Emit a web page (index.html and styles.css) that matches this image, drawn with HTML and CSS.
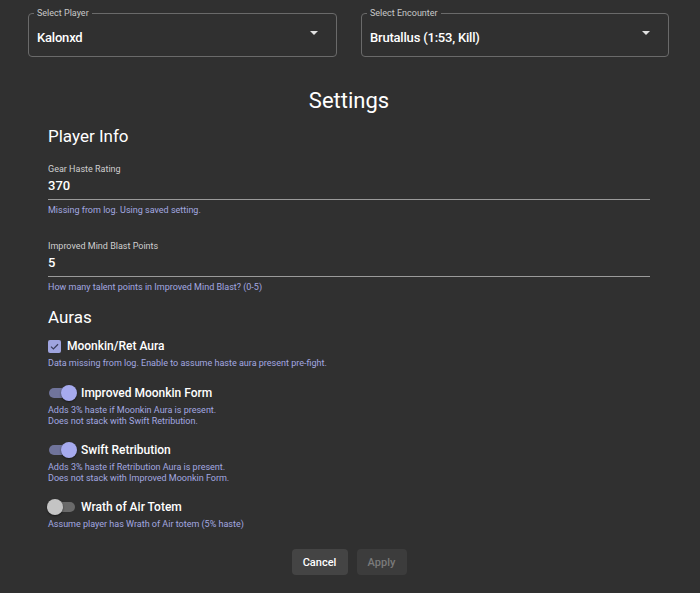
FILE: index.html
```html
<!DOCTYPE html>
<html>
<head>
<meta charset="utf-8">
<link rel="stylesheet" href="styles.css">
</head>
<body>
<div class="selects">
  <div class="select">
    <span class="select-label">Select Player</span>
    <span class="select-value">Kalonxd</span>
    <span class="arrow"></span>
  </div>
  <div class="select">
    <span class="select-label">Select Encounter</span>
    <span class="select-value">Brutallus (1:53, Kill)</span>
    <span class="arrow"></span>
  </div>
</div>
<div class="content">
  <h1 class="title">Settings</h1>
  <h2 class="section">Player Info</h2>
  <div class="field first">
    <div class="field-label">Gear Haste Rating</div>
    <div class="field-value">370</div>
    <div class="helper">Missing from log. Using saved setting.</div>
  </div>
  <div class="field">
    <div class="field-label">Improved Mind Blast Points</div>
    <div class="field-value">5</div>
    <div class="helper">How many talent points in Improved Mind Blast? (0-5)</div>
  </div>
  <h2 class="section auras">Auras</h2>
  <div class="option check-opt">
    <div class="opt-row">
      <span class="checkbox"><svg viewBox="0 0 14 14" width="14" height="14"><path d="M3.2 7.2 L5.8 9.7 L10.8 4.6" fill="none" stroke="#3a3d5c" stroke-width="1.3"/></svg></span>
      <span class="opt-label">Moonkin/Ret Aura</span>
    </div>
    <div class="helper">Data missing from log. Enable to assume haste aura present pre-fight.</div>
  </div>
  <div class="option first-toggle">
    <div class="opt-row">
      <span class="toggle on"><span class="thumb"></span></span>
      <span class="opt-label">Improved Moonkin Form</span>
    </div>
    <div class="helper">Adds 3% haste if Moonkin Aura is present.<br>Does not stack with Swift Retribution.</div>
  </div>
  <div class="option">
    <div class="opt-row">
      <span class="toggle on"><span class="thumb"></span></span>
      <span class="opt-label">Swift Retribution</span>
    </div>
    <div class="helper">Adds 3% haste if Retribution Aura is present.<br>Does not stack with Improved Moonkin Form.</div>
  </div>
  <div class="option">
    <div class="opt-row">
      <span class="toggle off"><span class="thumb"></span></span>
      <span class="opt-label">Wrath of Air Totem</span>
    </div>
    <div class="helper">Assume player has Wrath of Air totem (5% haste)</div>
  </div>
  <div class="actions">
    <button class="btn cancel">Cancel</button>
    <button class="btn apply" disabled>Apply</button>
  </div>
</div>
</body>
</html>
```
FILE: styles.css
```css
html, body {
  margin: 0;
  padding: 0;
  background: #303030;
  color: #ffffff;
  font-family: Roboto, "Liberation Sans", sans-serif;
}
.selects {
  display: grid;
  grid-template-columns: 309px 308px;
  gap: 24px;
  padding: 13px 0 0 28px;
}
.select {
  position: relative;
  height: 44px;
  box-sizing: border-box;
  border: 1px solid #6a6a6a;
  border-radius: 4px;
  display: flex;
  align-items: center;
  padding: 4px 8px 0 8px;
}
.select-label {
  position: absolute;
  top: -7px;
  left: 5px;
  padding: 0 3px;
  background: #303030;
  font-size: 9px;
  line-height: 12px;
  color: #c8c8c8;
}
.select-value {
  font-size: 13px;
  letter-spacing: -0.2px;
  font-weight: 500;
  flex: 1;
}
.arrow {
  width: 0;
  height: 0;
  border-left: 4px solid transparent;
  border-right: 4px solid transparent;
  border-top: 4px solid #e0e0e0;
  margin-right: 10px;
  margin-top: -8px;
}
.content {
  padding: 0 50px 0 48px;
}
.title {
  margin: 30px 0 0 0;
  text-align: center;
  font-size: 22px;
  line-height: 28px;
  font-weight: 400;
}
.section {
  margin: 9px 0 0 0;
  font-size: 17px;
  line-height: 24px;
  font-weight: 400;
}
.field {
  margin-top: 23px;
}
.field.first {
  margin-top: 14px;
}
.field-label {
  font-size: 9px;
  line-height: 14px;
  color: #cfcfcf;
}
.field-value {
  font-size: 13px;
  font-weight: 500;
  line-height: 20px;
  padding-bottom: 3px;
  border-bottom: 1px solid #9a9a9a;
}
.helper {
  margin-top: 5px;
  font-size: 9px;
  line-height: 11px;
  color: #a3a8e0;
}
.section.auras {
  margin-top: 12px;
}
.option {
  margin-top: 14px;
}
.option.check-opt {
  margin-top: 8px;
}
.option.first-toggle {
  margin-top: 15px;
}
.opt-row {
  display: flex;
  align-items: center;
  height: 18px;
}
.opt-label {
  font-size: 12px;
  font-weight: 500;
  line-height: 18px;
}
.checkbox {
  width: 13px;
  height: 13px;
  box-sizing: border-box;
  border-radius: 2px;
  background: #9fa4df;
  margin-right: 6px;
  display: flex;
}
.checkbox svg {
  width: 13px;
  height: 13px;
}
.toggle {
  position: relative;
  width: 28px;
  height: 14px;
  margin-right: 5px;
  display: flex;
  align-items: center;
}
.toggle::before {
  content: "";
  position: absolute;
  left: 1px;
  right: 1px;
  top: 2px;
  height: 10px;
  border-radius: 5px;
}
.toggle.on::before { background: #70749b; }
.toggle.off::before { background: #6a6a6a; }
.thumb {
  position: absolute;
  top: -1px;
  width: 16px;
  height: 16px;
  border-radius: 50%;
}
.toggle.on .thumb { right: -1px; background: #a6aaee; box-shadow: 0 1px 2px rgba(0,0,0,0.5); }
.toggle.off .thumb { left: -1px; background: #c4c4c4; box-shadow: 0 1px 2px rgba(0,0,0,0.5); }
.opt-row + .helper {
  margin-top: 3px;
}
.actions {
  display: flex;
  justify-content: center;
  gap: 9px;
  margin-top: 19px;
}
.btn {
  height: 26px;
  border: none;
  border-radius: 4px;
  font-family: Roboto, "Liberation Sans", sans-serif;
  font-size: 11px;
  font-weight: 500;
  padding: 0;
}
.btn.cancel {
  width: 56px;
  background: #444444;
  color: #ffffff;
}
.btn.apply {
  width: 50px;
  background: #3c3c3c;
  color: #7a7a7a;
}
```
